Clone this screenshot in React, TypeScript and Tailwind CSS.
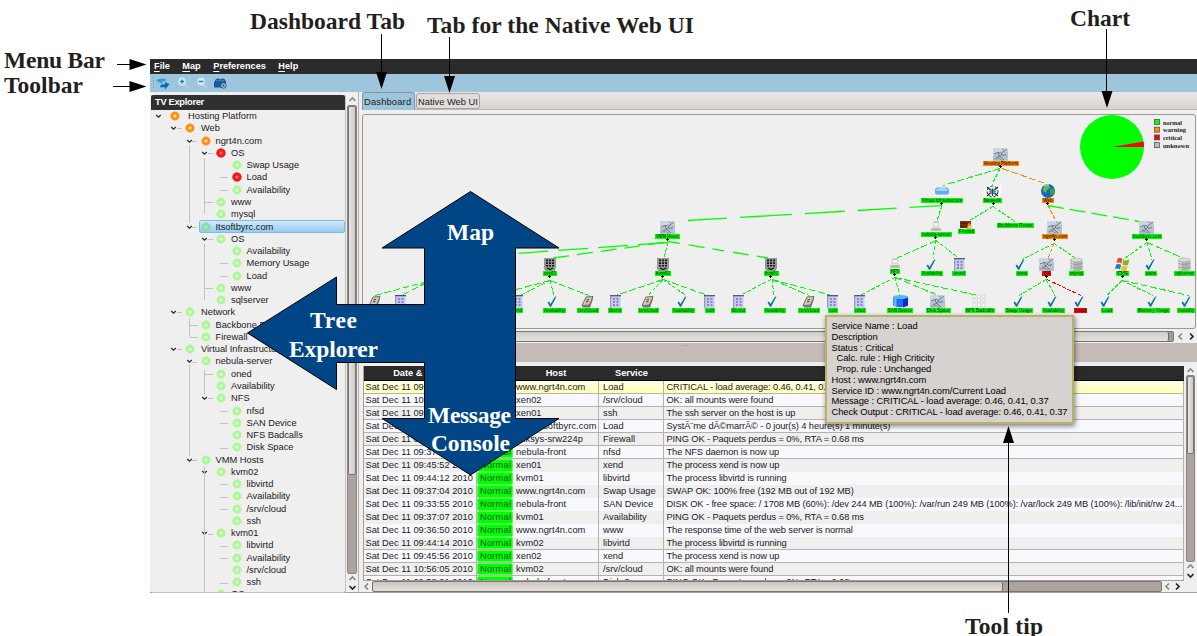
import React from "react";

type Tone = "g" | "o" | "r";
type TreeRow = [depth: number, label: string, tone?: Tone, open?: boolean];

const TREE: TreeRow[] = [
  [0, "Hosting Platform", "o", true],
  [1, "Web", "o", true],
  [2, "ngrt4n.com", "o", true],
  [3, "OS", "r", true],
  [4, "Swap Usage"],
  [4, "Load", "r"],
  [4, "Availability"],
  [3, "www"],
  [3, "mysql"],
  [2, "Itsoftbyrc.com", "g", true],
  [3, "OS", "g", true],
  [4, "Availability"],
  [4, "Memory Usage"],
  [4, "Load"],
  [3, "www"],
  [3, "sqlserver"],
  [1, "Network", "g", true],
  [2, "Backbone Router"],
  [2, "Firewall"],
  [1, "Virtual Infrastructure", "g", true],
  [2, "nebula-server", "g", true],
  [3, "oned"],
  [3, "Availability"],
  [3, "NFS", "g", true],
  [4, "nfsd"],
  [4, "SAN Device"],
  [4, "NFS Badcalls"],
  [4, "Disk Space"],
  [2, "VMM Hosts", "g", true],
  [3, "kvm02", "g", true],
  [4, "libvirtd"],
  [4, "Availability"],
  [4, "/srv/cloud"],
  [4, "ssh"],
  [3, "kvm01", "g", true],
  [4, "libvirtd"],
  [4, "Availability"],
  [4, "/srv/cloud"],
  [4, "ssh"],
  [3, "OS"],
];

const INDENT = ["pl-[3px]", "pl-[18px]", "pl-[33.5px]", "pl-[49px]", "pl-[64.5px]"];
const LABEL_GAP = ["pl-[8px]", "pl-[6px]", "pl-[5px]", "pl-[5px]", "pl-[5px]"];
const DOT = { g: "#a0fb96", o: "#ff8c0c", r: "#fb1717" };
const DOT_IN = { g: "#f4fff0", o: "#ffe6c0", r: "#fb7070" };
const DOT_RING = { g: "#d3f3a0", o: "#ffae50", r: "#e02020" };

function Chevron({ open }: { open?: boolean }) {
  return (
    <svg className="w-[10px] h-[8px] shrink-0" viewBox="0 0 10 8">
      {open && <path d="M2.2 3 L4.5 5.2 L6.8 3" fill="none" stroke="#2a2a2a" strokeWidth="1.3" />}
    </svg>
  );
}

function TreeItem({ row, selected }: { row: TreeRow; selected: boolean }) {
  const [depth, label, tone = "g", open] = row;
  return (
    <div className={`flex items-center h-[12.28px] shrink-0 ${INDENT[depth]}`}>
      <Chevron open={open} />
      <span className="w-[6px] shrink-0" />
      <span
        className={
          selected
            ? "flex items-center flex-1 h-[12.5px] rounded-[2px] border border-[#7fb9e4] bg-linear-to-b from-[#d2eafa] to-[#93ccf3] -ml-[2px] pl-px"
            : "flex items-center"
        }
      >
        <svg className="w-[10px] h-[10px] shrink-0" viewBox="0 0 10 10">
          <circle cx="5" cy="5" r="4.3" fill={selected ? "#84deb0" : DOT[tone]} stroke={selected ? "#92d8b8" : DOT_RING[tone]} strokeWidth="0.8" />
          <circle cx="5" cy="5" r="1.6" fill={selected ? "#b8eccf" : DOT_IN[tone]} />
        </svg>
        <span className={`whitespace-nowrap leading-[12px] ${LABEL_GAP[depth]}`}>{label}</span>
      </span>
    </div>
  );
}

function TreeLines() {
  const y = (i: number) => Math.round(116 + 12.28 * i) + 0.5;
  const vertical: [number, number, number][] = [
    [189.5, 145, 223], [204.5, 158, 214], [204.5, 244, 300], [189.5, 318, 337],
    [189.5, 365, 456], [204.5, 370, 395], [204.5, 466, 592],
  ];
  const stubs = [5, 6, 12, 13, 24, 25, 27, 30, 31, 32, 35, 36, 38];
  return (
    <svg className="absolute left-0 top-0 w-[194px] h-[482px]" viewBox="151 110 194 482" stroke="#c2c2c2" strokeWidth="1" shapeRendering="crispEdges">
      {vertical.map(([x, a, b], i) => <path key={i} d={`M${x} ${a}V${b}`} />)}
      {stubs.map((i) => <path key={i} d={`M220 ${y(i)}h8`} />)}
      {[7, 14, 21].map((i) => <path key={i} d={`M205 ${y(i)}h8`} />)}
      {[17, 18].map((i) => <path key={i} d={`M190 ${y(i)}h8`} />)}
      {[1, 16, 19].map((i) => <path key={i} d={`M177 ${y(i)}h5`} />)}
      {[2, 9, 20, 28].map((i) => <path key={i} d={`M192 ${y(i)}h5`} />)}
      {[3, 10, 23, 34].map((i) => <path key={i} d={`M208 ${y(i)}h5`} />)}
    </svg>
  );
}

type Kind = "pic" | "cloud" | "ball" | "globe" | "wall" | "none" | "box" | "check" | "sheet" | "cyl" | "bluecyl" | "win" | "server" | "book" | "grid";
type MapNode = [kind: Kind, ix: number, iy: number, lx: number, lw: number, ly: number, label: string, tone?: Tone];

const NODES: MapNode[] = [
  ["pic", 993, 148, 983, 36, 161, "Hosting Platform", "o"],
  ["cloud", 935, 187, 921, 42, 198, "Virtual Infrastructure"],
  ["ball", 984, 185, 983, 19, 198, "Network"],
  ["globe", 1041, 184, 1042, 12, 198, "Web", "o"],
  ["pic", 660, 221, 655, 25, 234, "VMM Hosts"],
  ["box", 931, 221, 921, 31, 232, "nebula-server"],
  ["wall", 960, 221, 958, 17, 229, "Firewall"],
  ["none", 0, 0, 997, 37, 223, "Backbone Router"],
  ["pic", 1047, 221, 1042, 26, 234, "ngrt4n.com", "o"],
  ["pic", 1139, 221, 1132, 30, 234, "Itsoftbyrc.com"],
  ["server", 544, 258, 543, 14, 271, "xen01"],
  ["server", 657, 258, 655, 16, 271, "kvm02"],
  ["server", 765, 258, 764, 15, 271, "kvm01"],
  ["box", 890, 258, 890, 10, 269, "NFS"],
  ["check", 926, 259, 921, 22, 271, "Availability"],
  ["sheet", 954, 258, 952, 14, 271, "oned"],
  ["check", 1015, 259, 1016, 12, 271, "www"],
  ["pic", 1039, 258, 1042, 9, 271, "OS", "r"],
  ["cyl", 1070, 258, 1069, 15, 271, "mysql"],
  ["win", 1115, 257, 1116, 13, 271, "OS"],
  ["check", 1145, 259, 1145, 12, 271, "www"],
  ["cyl", 1178, 258, 1174, 21, 271, "sqlserver"],
  ["book", 369, 296, 363, 21, 308, "/srv/cloud"],
  ["sheet", 395, 295, 394, 11, 308, "ssh"],
  ["sheet", 512, 295, 509, 14, 308, "libvirtd"],
  ["check", 547, 296, 543, 23, 308, "Availability"],
  ["book", 582, 296, 577, 22, 308, "/srv/cloud"],
  ["sheet", 610, 295, 608, 14, 308, "libvirtd"],
  ["book", 642, 296, 638, 21, 308, "/srv/cloud"],
  ["check", 677, 296, 672, 23, 308, "Availability"],
  ["sheet", 704, 295, 705, 10, 308, "ssh"],
  ["sheet", 733, 295, 731, 15, 308, "libvirtd"],
  ["check", 767, 296, 764, 22, 308, "Availability"],
  ["book", 803, 296, 798, 22, 308, "/srv/cloud"],
  ["sheet", 827, 295, 828, 10, 308, "ssh"],
  ["sheet", 854, 295, 854, 12, 308, "nfsd"],
  ["bluecyl", 893, 295, 887, 26, 308, "SAN Device"],
  ["pic", 930, 295, 926, 25, 308, "Disk Space"],
  ["grid", 973, 295, 965, 30, 308, "NFS Badcalls"],
  ["check", 1013, 296, 1005, 28, 308, "Swap Usage"],
  ["check", 1047, 296, 1042, 23, 308, "Availability"],
  ["check", 1074, 296, 1074, 13, 308, "Load", "r"],
  ["check", 1100, 296, 1101, 12, 308, "Load"],
  ["check", 1147, 296, 1137, 33, 308, "Memory Usage"],
  ["check", 1181, 296, 1177, 18, 308, "Availability"],
];

type Edge = [x1: number, y1: number, x2: number, y2: number, tone?: Tone];
const EDGES: Edge[] = [
  [1000, 168, 943, 185], [1000, 168, 992, 184], [1002, 168, 1048, 184, "o"],
  [942, 205, 937, 220],
  [993, 206, 968, 221], [993, 206, 1015, 221],
  [1048, 205, 1055, 219, "o"],
  [668, 242, 664, 257],
  [550, 280, 520, 295], [550, 280, 490, 296], [550, 280, 554, 295], [550, 280, 589, 295],
  [375, 295, 450, 275], [403, 294, 450, 270],
  [663, 279, 616, 295], [663, 279, 648, 295], [663, 279, 686, 295], [663, 279, 708, 295],
  [771, 279, 740, 295], [772, 279, 774, 295], [772, 279, 809, 295], [772, 279, 832, 295],
  [936, 240, 896, 258], [936, 240, 933, 258], [936, 240, 958, 257],
  [895, 277, 860, 295], [895, 277, 900, 295], [895, 277, 936, 294], [895, 277, 978, 295],
  [1054, 243, 1022, 259], [1054, 243, 1048, 258, "o"], [1054, 243, 1076, 258],
  [1147, 242, 1123, 259], [1147, 242, 1152, 259], [1147, 242, 1184, 258],
  [1046, 279, 1019, 295], [1046, 279, 1055, 295], [1047, 279, 1081, 295, "r"],
  [1122, 280, 1107, 295], [1122, 280, 1153, 295], [1122, 280, 1189, 295],
];
const LONG_EDGES: { d: string; dash: string }[] = [
  { d: "M688 220.5L942 205.5", dash: "39 13 52 13 40 13 39 13 32 0" },
  { d: "M668 242.5L516 253.5", dash: "30 10" },
  { d: "M664 242.5L553 258", dash: "16 8" },
  { d: "M668 241.5L768 258", dash: "12 9 16 8" },
  { d: "M1048 205.5L1139 221.5", dash: "16 6" },
];
const TONE = { g: "#00ff00", o: "#ff8c00", r: "#ff0000" };
const PLUSES: [number, number][] = [
  [1000, 166], [941, 203], [993, 203], [1047, 203], [667, 239], [935, 237], [1054, 239], [1146, 239],
  [549, 276], [662, 276], [770, 276], [894, 274], [1046, 276], [1122, 276],
];

function Glyph({ kind }: { kind: Kind }) {
  switch (kind) {
    case "pic":
      return (
        <g>
          <rect width="15" height="13" fill="#b6c2d0" />
          <path d="M0 0H15V4L9 3L0 8Z" fill="#cbd5e0" />
          <path d="M1 6L5 4.5L8 6L11 3L14 1.5M5 4.5L7 8.5L11 12M8 6L10 7.5L13 6.5M3 9.5L7 8.5" fill="none" stroke="#66717f" strokeWidth="0.9" />
          <path d="M1 11L6 10.5L9 12.5M9 1L12 2.5" stroke="#8a97a8" fill="none" />
          <circle cx="7" cy="6" r="1.4" fill="#eef2f6" stroke="#4c5765" strokeWidth=".7" />
        </g>
      );
    case "cloud":
      return (
        <g>
          <rect y="0.5" width="14" height="7" rx="2.6" fill="#5faef3" />
          <path d="M1 2.5Q7-1 13 2.5L12 4H2Z" fill="#a8d4fb" />
        </g>
      );
    case "ball":
      return (
        <g>
          <rect width="17" height="12.5" fill="#fff" />
          <circle cx="8.5" cy="6.5" r="5.4" fill="#e8eef0" stroke="#26323a" strokeWidth="1" strokeDasharray="3 1.5" />
          <path d="M3 2L6.5 5M14 2L10.500 5M3 11L6.500 8M14 11L10.500 8" stroke="#1f2a30" strokeWidth="1.3" />
          <path d="M8.500 3L12 6.500L8.500 10L5 6.500Z" fill="#4b8aa4" />
          <path d="M8.500 4V11" stroke="#205064" />
        </g>
      );
    case "globe":
      return (
        <g>
          <circle cx="7" cy="7" r="7" fill="#1567b8" />
          <path d="M2 4Q5 0 8 1L9 4L6 6L5 9L2 7Z" fill="#58c04a" />
          <path d="M9 5L13 4L13.500 8L11 12L9 9Z" fill="#3da048" />
          <path d="M3 2Q6 0 8 1" stroke="#c6e8f8" fill="none" />
        </g>
      );
    case "wall":
      return (
        <g>
          <rect width="11" height="7" fill="#7c3219" />
          <path d="M0 2.500H11M0 5H11M4 0V2.500M7 2.500V5M3 5V7" stroke="#4d1a0a" strokeWidth=".7" />
          <path d="M9 1.500Q12.500 4.500 11 8H7.500Q6.500 5 9 1.500Z" fill="#ff8a1c" />
          <circle cx="9.500" cy="6.300" r="1.300" fill="#ffd869" />
        </g>
      );
    case "box":
      return (
        <g>
          <path d="M2 0H8L8.500 6.500H1.500Z" fill="#d5d5d5" />
          <path d="M3 2H7V5H3Z" fill="#f2f2f2" />
          <rect y="7" width="10" height="3" fill="#bfbfbf" />
          <path d="M3 1H7M2 8.500H8" stroke="#a6a6a6" strokeWidth=".7" />
        </g>
      );
    case "check":
      return <path d="M0.500 6.500L2 5.500L3.500 8L8 0.800L9.500 0.500L4 11L2.800 10.500Z" fill="#0a74a8" />;
    case "sheet":
      return (
        <g>
          <rect x=".5" y=".5" width="10" height="12.500" fill="#c9c9f5" />
          <path d="M0 .7H11" stroke="#4a4a68" strokeWidth="1.200" />
          <path d="M.7 1V13" stroke="#8888a8" />
          <path d="M3 4H5M6.500 4H8.500M3 7H5M6.500 7H8.500M3 10H5M6.500 10H8.500" stroke="#4d4d76" strokeWidth="1.100" />
        </g>
      );
    case "cyl":
      return (
        <g>
          <path d="M0.500 2V12Q6.500 14.500 12.500 12V2Z" fill="#b4b4b4" />
          <path d="M2.500 3V12.500" stroke="#d8d8d8" strokeWidth="2" />
          <path d="M.5 5.500Q6.500 8 12.500 5.500M.5 9Q6.500 11.500 12.500 9" fill="none" stroke="#8a8a8a" strokeWidth=".6" />
          <ellipse cx="6.500" cy="2" rx="6" ry="1.900" fill="#dcdcdc" stroke="#999" strokeWidth=".5" />
        </g>
      );
    case "bluecyl":
      return (
        <g>
          <path d="M0 2V10.500Q7.500 14 15 10.500V2Z" fill="#1e6cf0" />
          <path d="M10 2H15V10.500L10 12.500Z" fill="#0a2fc4" />
          <path d="M2 3V11" stroke="#5cb4ff" strokeWidth="3" />
          <ellipse cx="7.500" cy="2" rx="7.500" ry="2" fill="#57b5ff" />
        </g>
      );
    case "win":
      return (
        <g>
          <path d="M2.500 1.500Q5 0 7.500 2L6.500 6.500Q4 5 1.500 6Z" fill="#e5531c" />
          <path d="M8.500 3Q11 4 14.500 2.500L13 8Q10.500 9 7.500 7.500Z" fill="#7db72f" />
          <path d="M1.200 7.500Q4 6.300 6.200 8L5 12.500Q3 11 0 12Z" fill="#3372c6" />
          <path d="M7.200 8.800Q10 10.200 12.800 9L11.500 13.500Q8.500 14.500 6 13Z" fill="#f2be1d" />
        </g>
      );
    case "server":
      return (
        <g>
          <path d="M0 0H12V10L10.500 13H1.500L0 11Z" fill="#979797" />
          <path d="M2 1.500h2v1.800H2zM5 1.500h2v1.800H5zM8 1.500h2v1.800H8zM2 4.200h2V6H2zM5 4.200h2V6H5zM8 4.200h2V6H8zM2 7h2v1.600H2zM5 7h2v1.600H5zM8 7h2v1.600H8z" fill="#181818" />
          <path d="M3 10L6 11.500L9 10" stroke="#111" fill="none" strokeWidth="1.200" />
        </g>
      );
    case "book":
      return (
        <g>
          <path d="M4 1L11 .5L7.500 9L0 9.500Z" fill="#cfc8bb" stroke="#55504a" strokeWidth=".8" />
          <path d="M0 9.500L7.500 9L11 .5V3L8 11.500H1Z" fill="#77716a" />
          <path d="M4.500 4L7 3.500M4 6L6.500 5.500" stroke="#5b3d28" />
        </g>
      );
    case "grid":
      return (
        <g>
          <path d="M0 0h3v3H0zM4.500 0h3v3h-3zM9 0h3v3H9zM0 4h3v3H0zM4.500 4h3v3h-3zM9 4h3v3H9zM0 8h3v4H0zM4.500 8h3v4h-3zM9 8h3v4H9z" fill="#fafafa" stroke="#c8ccc8" strokeWidth=".6" />
        </g>
      );
    default:
      return null;
  }
}

function ServiceMap() {
  const legend: [string, string, number][] = [["normal", "#00ff00", 19], ["warning", "#ff8c00", 23], ["critical", "#ff0000", 19], ["unknown", "#bdbdbd", 26]];
  return (
    <svg className="block w-[832px] h-[213px]" viewBox="363 115 832 213">
      <g fill="none" strokeWidth="1">
        <g shapeRendering="crispEdges">
          {EDGES.map(([x1, y1, x2, y2, t = "g"], i) => (
            <path key={i} d={`M${x1} ${y1}.5L${x2} ${y2}.5`} stroke={TONE[t]} strokeDasharray={Math.abs(x2 - x1) > 35 ? "7 2.500" : "4 1.600"} />
          ))}
        </g>
        {LONG_EDGES.map((e) => <path key={e.d} d={e.d} stroke="#00ff00" strokeWidth="1.300" strokeDasharray={e.dash} />)}
      </g>
      {NODES.map(([kind, ix, iy, lx, lw, ly, label, tone = "g"], i) => (
        <g key={i}>
          <g transform={`translate(${ix} ${iy})`}><Glyph kind={kind} /></g>
          <rect x={lx} y={ly} width={lw} height="5" fill={TONE[tone]} shapeRendering="crispEdges" />
          <text x={lx + 1} y={ly + 4.2} textLength={lw - 2} lengthAdjust="spacingAndGlyphs" fontSize="5" fill={tone === "g" ? "#075c07" : "#4a1d00"} fontFamily="Liberation Sans, sans-serif" fontWeight="bold">{label}</text>
        </g>
      ))}
      {PLUSES.map(([x, y], i) => <path key={i} d={`M${x - 1} ${y + 0.5}h3M${x + 0.5} ${y - 1}v3`} stroke="#000" strokeWidth="1" />)}
      <circle cx="1112" cy="147" r="32" fill="#00ff00" />
      <path d="M1112 147L1143.500 141.500A32 32 0 0 1 1144 147Z" fill="#ff0000" />
      {legend.map(([label, color, w], i) => (
        <g key={label}>
          <rect x="1154.500" y={119.500 + i * 7.700} width="5" height="5" fill={color} stroke="#555" strokeWidth=".8" />
          <text x="1163" y={124.700 + i * 7.700} textLength={w} lengthAdjust="spacingAndGlyphs" fontSize="6.500" fontWeight="bold" fill="#222" fontFamily="Liberation Serif, serif">{label}</text>
        </g>
      ))}
    </svg>
  );
}

const PING = "PING OK -  Paquets perdus = 0%, RTA = 0.68 ms";
const MESSAGES: [string, string, string, string][] = [
  ["09:46:12", "www.ngrt4n.com", "Load", "CRITICAL - load average: 0.46, 0.41, 0.37"],
  ["10:56:05", "xen02", "/srv/cloud", "OK: all mounts were found"],
  ["09:45:56", "xen01", "ssh", "The ssh server on the host is up"],
  ["09:38:50", "www.itsoftbyrc.com", "Load", "SystÃ¨me dÃ©marrÃ© - 0 jour(s) 4 heure(s) 1 minute(s)"],
  ["09:37:21", "linksys-srw224p", "Firewall", PING],
  ["09:37:55", "nebula-front", "nfsd", "The NFS daemon is now up"],
  ["09:45:52", "xen01", "xend", "The process xend is now up"],
  ["09:44:12", "kvm01", "libvirtd", "The process libvirtd is running"],
  ["09:37:04", "www.ngrt4n.com", "Swap Usage", "SWAP OK: 100% free (192 MB out of 192 MB)"],
  ["09:33:55", "nebula-front", "SAN Device", "DISK OK - free space: / 1708 MB (60%): /dev 244 MB (100%): /var/run 249 MB (100%): /var/lock 249 MB (100%): /lib/init/rw 24..."],
  ["09:37:07", "kvm01", "Availability", PING],
  ["09:36:50", "www.ngrt4n.com", "www", "The response time of the web server is normal"],
  ["09:44:14", "kvm02", "libvirtd", "The process libvirtd is running"],
  ["09:45:56", "xen02", "xend", "The process xend is now up"],
  ["10:56:05", "kvm02", "/srv/cloud", "OK: all mounts were found"],
  ["09:58:01", "nebula-front", "Disk Space", PING],
];

function Console() {
  return (
    <div className="w-[821px] h-[215px] overflow-hidden border-l border-[#a79e9a] border-b">
      <div className="grid grid-cols-[113px_36px_86px_65px_1fr] h-[15px] items-center bg-[#2a2a2a] border-b border-black text-center font-bold text-white leading-[14px]">
        <span className="pr-px">Date &amp; Hour</span>
        <span>Status</span>
        <span>Host</span>
        <span>Service</span>
        <span>Message</span>
      </div>
      {MESSAGES.map(([time, host, service, message], i) => {
        const ruled = i < 6 || i > 11;
        const bg = i === 0 ? "bg-linear-to-b from-[#ffffe6] to-[#ffffb4]" : i % 2 ? "bg-[#f8f9ff]" : "bg-[#efefef]";
        return (
          <div key={i} className={`grid grid-cols-[113px_36px_86px_65px_1fr] h-[13px] leading-[12px] whitespace-nowrap ${bg} ${ruled ? "border-b border-[#b9b0ac]" : ""}`}>
            <span className="pl-[1.5px] border-r border-[#b9b0ac]">Sat Dec 11 {time} 2010</span>
            <span className="px-[2px] rounded-[2px] bg-[#00ff00] border border-[#55f655] text-[#064d06] leading-[11px] overflow-hidden tracking-[0.2px]">Normal</span>
            <span className="pl-[3px] border-r border-[#b9b0ac] overflow-hidden tracking-[0.05px]">{host}</span>
            <span className="pl-[4px] border-r border-[#b9b0ac]">{service}</span>
            <span className="pl-[2.5px] border-r border-[#b9b0ac] overflow-hidden tracking-[-0.11px]">{message}</span>
          </div>
        );
      })}
    </div>
  );
}

function Arrow({ turn, dim }: { turn: string; dim?: boolean }) {
  return (
    <svg className={`w-[9px] h-[9px] shrink-0 ${turn}`} viewBox="0 0 9 9">
      <path d="M1.500 6L4.500 3L7.500 6" fill="none" stroke={dim ? "#8a8684" : "#222"} strokeWidth="1.600" />
    </svg>
  );
}

function Toolbar() {
  return (
    <div className="flex items-center h-[18px] pl-[2px] bg-[#9dc5dc]">
      <svg className="w-[80px] h-[14px]" viewBox="152 76.5 80 14">
        <path d="M153.500 78V90" stroke="#6d8c9e" strokeDasharray="1 2" />
        <path d="M156.500 81.500Q157.500 79 160.500 79.200H166L165 82H161.500L163 84.500Z" fill="#2b9be4" />
        <path d="M169.500 84.500L165 90V87.800H160L161 85H165V82.800Z" fill="#0a66b8" />
        <g stroke="#d2c8bc" strokeWidth="2.400"><path d="M184.500 85L188 88.500" /><path d="M203.500 85L206.500 88.500" /></g>
        <circle cx="182" cy="82" r="3.900" fill="#d9f1fc" stroke="#b9cfdb" strokeWidth=".8" />
        <path d="M180 82H184.200M182.100 80V84.200" stroke="#1c7ec8" strokeWidth="1.400" />
        <circle cx="201" cy="82" r="3.900" fill="#d9f1fc" stroke="#b9cfdb" strokeWidth=".8" />
        <path d="M198.800 82H203.200" stroke="#1c7ec8" strokeWidth="1.600" />
        <path d="M214 83L216 79.500L219 79L220 80L222 79L224.500 79.500L226 82V88H214Z" fill="#19599a" />
        <path d="M216 81.200H224" stroke="#4586c0" />
        <circle cx="223.500" cy="86" r="2.700" fill="#a4c8e6" stroke="#174a7e" strokeWidth=".8" />
        <circle cx="223.500" cy="86" r="1" fill="#174a7e" />
      </svg>
    </div>
  );
}

function Annotations() {
  const heads: [number, number, string][] = [
    [146.500, 64, "r"], [146.500, 86, "r"], [381, 89, "d"], [449, 93, "d"], [1106.500, 108, "d"], [1008, 426, "u"],
  ];
  const labels: [string, number, number, number][] = [
    ["Menu Bar", 4, 68, 101], ["Toolbar", 4, 93, 79], ["Dashboard Tab", 250, 29, 155],
    ["Tab for the Native Web UI", 427, 33, 267], ["Chart", 1070, 26, 60], ["Tool tip", 965, 634, 78],
  ];
  const inner: [string, number, number, number][] = [
    ["Map", 447, 240, 47], ["Tree", 310, 328, 47], ["Explorer", 289, 357, 89], ["Message", 428, 423, 83], ["Console", 431, 451, 79],
  ];
  return (
    <svg className="absolute left-0 top-0 w-[1197px] h-[636px] pointer-events-none" viewBox="0 0 1197 636" fontFamily="Liberation Serif, serif" fontWeight="bold" fontSize="23.500">
      <path d="M470.500 191.500L559 248H515.500V418.500H559L470.500 475L382 418.500H424.500V362.500H336.500V389.500L247.500 333L336.500 277V304.500H424.500V248H382Z" fill="#004586" stroke="#000" strokeWidth="1" />
      <path d="M117 64.500H134M113 86.500H134M381.500 34V74M449.500 37V78M1106.500 29V92M1008.500 442V613" stroke="#000" fill="none" />
      {heads.map(([x, y, dir], i) => (
        <path key={i} d={dir === "r" ? `M${x} ${y + 0.5}l-17 -5.500v11Z` : dir === "d" ? `M${x + 0.5} ${y}l-5.500 -17h11Z` : `M${x + 0.5} ${y}l-5.500 17h11Z`} />
      ))}
      {labels.map(([t, x, y, w]) => <text key={t} x={x} y={y} textLength={w} fill="#231f20">{t}</text>)}
      {inner.map(([t, x, y, w]) => <text key={t} x={x} y={y} textLength={w} fill="#fff">{t}</text>)}
    </svg>
  );
}

const TIP = [
  "Service Name : Load", "Description", "Status : Critical", "  Calc. rule : High Criticity", "  Prop. rule : Unchanged",
  "Host : www.ngrt4n.com", "Service ID : www.ngrt4n.com/Current Load", "Message : CRITICAL - load average: 0.46, 0.41, 0.37",
  "Check Output : CRITICAL - load average: 0.46, 0.41, 0.37",
];

export default function App() {
  return (
    <div className="relative w-[1197px] h-[636px] overflow-hidden bg-white pt-[59px] pl-[150px] text-[9.3px] text-[#1a1a1a] font-['Liberation_Sans',sans-serif]">
      <div className="flex flex-col w-[1047px] h-[534px] bg-[#efefef] border-b border-[#a8a09c]">
        <nav className="flex items-center h-[15px] pl-[4px] gap-[12.5px] bg-[#2b2b2b] text-white font-bold leading-[13px] text-[9.2px]">
          {["File", "Map", "Preferences", "Help"].map((m) => (
            <span key={m}><span className="underline underline-offset-2">{m[0]}</span>{m.slice(1)}</span>
          ))}
        </nav>
        <Toolbar />
        <div className="flex h-[500px]">
          <aside className="flex w-[208px] pt-[3px] pl-px">
            <div className="w-[195px] h-[498px] border-r border-b border-[#c9c4c1] rounded-b-[3px] overflow-hidden">
              <div className="h-[15px] pl-[4px] bg-[#303030] rounded-t-[2px] text-white font-bold leading-[15px] text-[9.3px] tracking-[-0.3px]">TV Explorer</div>
              <div className="relative flex flex-col w-[194px] h-[482px] overflow-hidden">
                <TreeLines />
                {TREE.map((row, i) => <TreeItem key={i} row={row} selected={i === 9} />)}
              </div>
            </div>
            <div className="flex flex-col items-center w-[12px]">
              <Arrow turn="rotate-0" dim />
              <div className="flex-1 w-[10px] mt-px rounded-[2px] bg-[#aca4a0] border border-[#8b837f]">
                <div className="h-[369px] w-full rounded-[2px] border border-[#777] bg-linear-to-r from-[#e8e5e2] to-[#cfcac6]" />
              </div>
              <Arrow turn="rotate-0" dim />
              <Arrow turn="rotate-180" />
            </div>
          </aside>
          <main className="flex flex-col w-[839px] pl-[3px] border-l border-[#b8b0ac]">
            <div className="flex h-[18px] bg-linear-to-b from-[#e9e7e5] to-[#d8d4d0] border-b border-[#bbb6b2] gap-px leading-[18px] tracking-[0.2px] whitespace-nowrap">
              <span className="w-[53px] h-[18px] pl-[1px] rounded-t-[3px] border border-b-0 border-[#7f98a6] bg-[#9dc5dc]">Dashboard</span>
              <span className="w-[64px] h-[16px] mt-px pl-[1px] leading-[17px] rounded-[3px] border border-[#aaa5a1] bg-[#e0ddda] tracking-[0px]">Native Web UI</span>
            </div>
            <div className="h-[4px]" />
            <section className="w-[834px] h-[215px] shrink-0 border border-[#9d9894] rounded-[3px] overflow-hidden">
              <ServiceMap />
            </section>
            <div className="flex items-center gap-[2px] h-[14px] shrink-0">
              <div className="w-[812px] h-[11px] rounded-[2px] bg-[#a39b97] border border-[#7b746f]">
                <div className="w-[806px] h-full rounded-[2px] border-r border-[#666] bg-linear-to-b from-[#d2cdc8] to-[#e4e1dd]" />
              </div>
              <Arrow turn="-rotate-90" dim />
              <Arrow turn="rotate-90" />
            </div>
            <div className="flex justify-center w-[836px] h-[19px] shrink-0 bg-[#c4bab7] pr-[190px] text-[7px] leading-[1px] text-[#777]">...</div>
            <div className="flex gap-px pt-[4px] pl-px h-[218px] shrink-0">
              <Console />
              <div className="flex flex-col items-center w-[11px]">
                <Arrow turn="rotate-0" dim />
                <div className="flex-1 w-[9px] rounded-[2px] bg-[#aca4a0] border border-[#8b837f]">
                  <div className="h-[78px] rounded-[2px] border border-[#777] bg-linear-to-r from-[#e8e5e2] to-[#cfcac6]" />
                </div>
                <Arrow turn="rotate-0" dim />
                <Arrow turn="rotate-180" />
              </div>
            </div>
            <div className="flex items-center h-[12px] gap-px">
              <Arrow turn="-rotate-90" dim />
              <div className="w-[790px] h-[11px] rounded-[2px] bg-[#aca4a0] border border-[#7b746f]">
                <div className="w-[630px] h-full rounded-[2px] border-r border-[#666] bg-linear-to-b from-[#cbc6c1] to-[#e4e1dd]" />
              </div>
              <Arrow turn="-rotate-90" dim />
              <Arrow turn="rotate-90" />
            </div>
          </main>
        </div>
      </div>
      <div className="absolute left-[825px] top-[315px] w-[249px] h-[109px] border-2 border-[#b9b266] bg-[#d6d2cf] shadow-[1px_2px_5px_rgba(0,0,0,0.5)] pl-[4.5px] pt-[4px] text-black whitespace-pre leading-[10.75px] text-[9.4px] tracking-[-0.08px]">
        {TIP.map((line) => <div key={line}>{line}</div>)}
      </div>
      <Annotations />
    </div>
  );
}
